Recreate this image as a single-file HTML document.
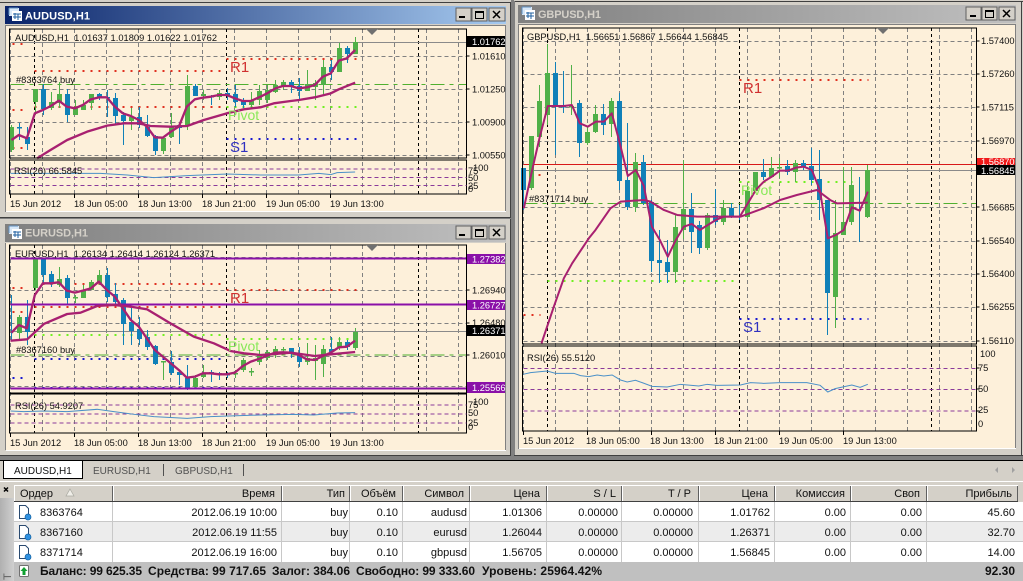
<!DOCTYPE html>
<html><head><meta charset="utf-8"><title>MT4</title>
<style>
html,body{margin:0;padding:0;background:#808080;width:1023px;height:581px;overflow:hidden}
svg{display:block;font-size:9.3px;overflow:hidden}
text{font-family:"Liberation Sans",sans-serif;fill:#111}
.c{shape-rendering:crispEdges}
.g{stroke:#808080;stroke-width:1;stroke-dasharray:4 3;fill:none}
.k{stroke:#000;stroke-width:1;stroke-dasharray:3 3;fill:none}
.bw{stroke:#1080b8;stroke-width:1;fill:none}
.bb{stroke:#1080b8;stroke-width:5;fill:none}
.gw{stroke:#50b048;stroke-width:1;fill:none}
.gb{stroke:#50b048;stroke-width:5;fill:none}
.m{fill:none;stroke:#a82070;stroke-width:7;stroke-linejoin:round}
.m3{fill:none;stroke:#a82070;stroke-width:6;stroke-linejoin:round}
.r{fill:none;stroke:#4a90c8;stroke-width:3}
.pd{stroke:#8a3a9a;stroke-width:1;stroke-dasharray:4 3;fill:none}
.dr{stroke:#e03020;stroke-width:2;stroke-dasharray:2 6;fill:none}
.dg{stroke:#70f020;stroke-width:2;stroke-dasharray:2 6;fill:none}
.db{stroke:#1818d0;stroke-width:2;stroke-dasharray:2 6;fill:none}
.o{stroke:#50b030;stroke-width:1;stroke-dasharray:14 5 4 5;fill:none}
.t{font-weight:bold;font-size:11px}
.w{fill:#fff}
.e{text-anchor:end}
.b{font-weight:bold;font-size:12px}
.tb{font-size:11px}
.tab{font-size:10px}
</style></head><body>
<svg width="1023" height="581" viewBox="0 0 1023 581" xmlns="http://www.w3.org/2000/svg">
<defs>
<linearGradient id="a" x1="0" x2="1" y1="0" y2="0"><stop offset="0" stop-color="#0a246a"/><stop offset="1" stop-color="#a6caf0"/></linearGradient>
<linearGradient id="n" x1="0" x2="1" y1="0" y2="0"><stop offset="0" stop-color="#808080"/><stop offset="1" stop-color="#c0c0c0"/></linearGradient>
<linearGradient id="sb" x1="0" x2="1" y1="0" y2="0"><stop offset="0" stop-color="#b0b0b0"/><stop offset="1" stop-color="#d0d0d0"/></linearGradient>
</defs>
<rect width="1023" height="581" fill="#808080"/>

<!-- WINDOW 1 -->
<g class="c">
<rect x="0" y="0" width="511" height="218" fill="#d4d0c8"/>
<rect x="0" y="2" width="511" height="1" fill="#404040"/>
<rect x="510" y="2" width="1" height="216" fill="#404040"/>
<rect x="0" y="217" width="511" height="1" fill="#404040"/>
<rect x="5" y="6" width="501" height="18" fill="url(#a)"/>
<rect x="5" y="25" width="501" height="187" fill="#808080"/>
<rect x="6" y="26" width="499" height="185" fill="#fdf0da"/>
<rect x="6" y="211" width="500" height="1" fill="#fff"/>
</g>
<g transform="translate(.5,0)">
<g class="c">
<path class="g" d="M10 29V194M42 29V194M74 29V194M106 29V194M138 29V194M170 29V194M202 29V194M234 29V194M266 29V194M298 29V194M330 29V194M362 29V194M394 29V194M426 29V194M458 29V194"/>
<path class="g" d="M10 56.500H466M10 89.500H466M10 122.500H466M10 155.500H466"/>
<path class="k" d="M34 29V194M226 29V194M418 29V194"/>
<path d="M10 42.500H466" stroke="#8a8a8a" fill="none"/>
<path class="o" d="M10 84.500H466"/>
<path class="dr" d="M12 44H28M34 71H222M226 59H356M34 107H222M12 110H28M12 148H28"/>
<path class="dg" d="M226 107H356"/>
<path class="db" d="M226 139H356"/>
<path class="bw" d="M19 123V140M27 127V150M43 84V115M67 89V122M99 93V100M107 90V117M115 93V125M123 112V145M139 107V128M147 115V137M155 135V155M179 125V144M195 84V96M211 95V105M227 88V100M235 85V107M243 98V108M291 80V93M299 78V100M331 60V80M347 46V63"/>
<path class="gw" d="M11 125V152M35 89V115M51 92V110M59 82V108M75 100V115M83 100V110M91 94V110M131 108V130M163 138V154M171 113V138M187 75V130M203 90V100M219 90V100M251 92V108M259 85V105M267 85V103M275 80V93M283 80V90M307 70V91M315 80V100M323 60V95M339 43V72M355 37V54"/>
<path class="bb" d="M19 127V128.500M27 137V144M43 89V109M67 94V115M99 94V97M107 97V98.500M115 98V116M123 115V121M139 117V125M147 127V136M155 136V151M179 125V128M195 86V96M211 96V97.500M227 93V96M235 94V102M243 101V105M291 82V87M299 86V91M331 67V72M347 48V54"/>
<path class="gb" d="M11 127V150M35 89V102M51 102V108M59 94V103M75 107V115M83 105V110M91 94V103M131 117V121M163 138V151M171 127V137M187 86V125M203 94V96M219 93V97M251 100V105M259 91V100M267 90V100M275 85V92M283 82V87M307 84V91M315 83V87M323 67V85M339 48V72M355 42V54"/>
</g>
<polyline class="m" transform="scale(.3333)" points="33,420 55,405 79,415 103,340 127,330 151,318 175,302 199,320 223,325 247,315 271,298 295,292 319,292 343,320 367,340 391,348 415,360 439,380 463,412 487,413 511,395 535,380 559,320 583,298 607,293 631,290 655,285 679,285 703,295 727,303 751,303 780,290 800,280 825,265 847,258 871,258 895,265 919,262 943,255 967,230 991,220 1015,182 1039,175 1064,150"/>
<polyline class="m" transform="scale(.3333)" points="110,475 150,450 200,420 260,395 320,377 370,370 415,370 450,378 510,380 560,378 610,360 679,340 730,328 780,322 820,310 871,303 895,300 943,292 991,280 1015,268 1064,248"/>
<g class="c">
<rect x="9" y="29" width="457" height="129" fill="none" stroke="#000"/>
<rect x="9" y="160" width="457" height="34" fill="none" stroke="#000"/>
<path class="pd" d="M10 169H466M10 177.500H466M10 185.500H466"/>
<path d="M466 42V43M466 56H469M466 89H469M466 122H469M466 155H469M10 194V198M74 194V198M138 194V198M202 194V198M266 194V198M330 194V198" stroke="#000"/>
</g>
<polyline class="r" transform="scale(.3333)" points="30,520 100,520 200,520 300,520 380,525 460,533 560,527 680,522 780,525 895,525 955,520 991,524 1010,518 1064,516"/>
</g>
<path d="M366 29h12l-6 6z" fill="#707070"/>
<text x="15" y="41" textLength="202">AUDUSD,H1&#160;&#160;1.01637 1.01809 1.01622 1.01762</text>
<text x="16" y="83">#8363764 buy</text>
<text x="14" y="174">RSI(26) 66.5845</text>
<text x="230" y="72" style="font-size:15px;fill:#d03030">R1</text>
<text x="228" y="120" style="font-size:14px;fill:#88e858">Pivot</text>
<text x="230" y="152" style="font-size:15px;fill:#3030c0">S1</text>
<rect class="c" x="467" y="36" width="38" height="11" fill="#000"/>
<text x="472" y="45" class="w">1.01762</text>
<text x="472" y="59.500">1.01610</text><text x="472" y="92.500">1.01250</text><text x="472" y="125.500">1.00900</text><text x="472" y="158.500">1.00550</text>
<text x="473" y="171">100</text><text x="468" y="174">75</text><text x="468" y="181">50</text><text x="468" y="189">25</text><text x="468" y="192">0</text>
<text x="10" y="207">15 Jun 2012</text><text x="74" y="207">18 Jun 05:00</text><text x="138" y="207">18 Jun 13:00</text><text x="202" y="207">18 Jun 21:00</text><text x="266" y="207">19 Jun 05:00</text><text x="330" y="207">19 Jun 13:00</text>

<!-- WINDOW 2 -->
<g class="c">
<rect x="0" y="218" width="511" height="238" fill="#d4d0c8"/>
<rect x="510" y="218" width="1" height="238" fill="#404040"/>
<rect x="0" y="218" width="511" height="1" fill="#808080"/>
<rect x="5" y="224" width="501" height="18" fill="url(#n)"/>
<rect x="5" y="243" width="501" height="207" fill="#808080"/>
<rect x="6" y="243" width="499" height="207" fill="#fdf0da"/>
<rect x="6" y="450" width="500" height="1" fill="#fff"/>
<rect x="0" y="455" width="511" height="1" fill="#404040"/>
</g>
<g transform="translate(.5,0)">
<g class="c">
<path class="g" d="M10 245V433M42 245V433M74 245V433M106 245V433M138 245V433M170 245V433M202 245V433M234 245V433M266 245V433M298 245V433M330 245V433M362 245V433M394 245V433M426 245V433M458 245V433"/>
<path class="g" d="M10 257.500H466M10 290.500H466M10 323.500H466M10 356.500H466M10 386.500H466"/>
<path class="k" d="M34 245V433M226 245V433M418 245V433"/>
<path d="M10 331.500H466" stroke="#8a8a8a" fill="none"/>
<path class="o" d="M10 355H466"/>
<path class="dr" d="M34 284H222M226 290H356M12 288H28M34 307H222M12 312H28"/>
<path class="dg" d="M34 335H222M226 339H356"/>
<path class="db" d="M34 359H222M12 378H28M34 388H222"/>
<path class="bw" d="M11 295V340M27 300V345M43 259V283M51 271V287M67 275V304M107 268V302M115 283V305M123 298V345M131 308V345M139 317V345M147 330V350M155 345V365M171 351V375M179 370V385M187 365V390M211 370V382M219 372V380M227 372V378M291 348V358M299 347V367M331 337V352M347 340V350"/>
<path class="gw" d="M19 315V340M35 259V290M59 267V287M75 295V303M83 285V298M91 280V290M99 270V285M163 361V380M195 375V388M203 365V378M235 370V378M243 358V372M251 368V376M259 350V365M267 350V360M275 346V358M283 347V352M307 343V365M315 345V380M323 345V377M339 337V350M355 328V350"/>
<path class="bb" d="M27 317V332M43 259V275M51 274V283M67 278V298M107 275V297M115 294V302M123 300V324M131 322V331M139 329V339M147 337V347M155 346V364M171 362V373M179 372V375M187 378V388M211 372V374M219 373V375M227 374V375.500M291 348V353M299 353V362M331 349V352M347 342V347"/>
<path class="gb" d="M19 317V333M35 259V288M59 279V285M75 297V298.500M83 290V298M91 282V290M99 275V283M163 361V362.500M195 378V387M203 373V377M235 373V374.500M243 360V370M251 371V372.500M259 355V362M267 352V358M275 349V355M283 349V350.500M307 358V362M315 358V361M323 349V364M339 342V347M355 332V348"/>
</g>
<path d="M10 258.500H466M10 304.500H466M10 388.500H466" stroke="#8a10a8" stroke-width="2" fill="none" class="c"/>
<polyline class="m" transform="translate(0,220) scale(.3333)" points="33,338 55,315 79,325 103,225 127,190 151,190 175,187 199,212 223,218 247,212 271,205 295,185 319,210 343,230 367,265 391,300 415,320 439,355 463,390 487,410 511,430 535,450 559,473 583,470 607,460 631,460 655,463 679,463 703,458 727,438 751,425 780,415 823,398 847,397 871,398 895,405 919,418 943,420 967,408 991,398 1015,382 1039,380 1064,362"/>
<polyline class="m" transform="translate(0,220) scale(.3333)" points="30,362 80,358 130,312 200,282 240,278 290,258 340,255 390,260 440,268 510,310 580,350 640,370 690,393 730,400 780,405 823,402 871,398 943,408 991,403 1064,396"/>
<g class="c">
<rect x="9" y="245" width="457" height="148" fill="none" stroke="#000"/>
<rect x="9" y="394" width="457" height="39" fill="none" stroke="#000"/>
<path class="pd" d="M10 405H466M10 414H466M10 423H466"/>
<path d="M466 290H469M466 323H469M466 355H469M10 433V437M74 433V437M138 433V437M202 433V437M266 433V437M330 433V437" stroke="#000"/>
</g>
<polyline class="r" transform="translate(0,220) scale(.3333)" points="30,573 70,575 130,573 200,575 290,568 340,575 400,583 460,590 560,595 630,590 780,585 880,583 940,585 1010,579 1064,578"/>
</g>
<path d="M366 245h12l-6 6z" fill="#707070"/>
<text x="15" y="257" textLength="200">EURUSD,H1&#160;&#160;1.26134 1.26414 1.26124 1.26371</text>
<text x="16" y="353">#8367160 buy</text>
<text x="15" y="409">RSI(26) 54.9207</text>
<text x="230" y="303" style="font-size:15px;fill:#d03030">R1</text>
<text x="228" y="351" style="font-size:14px;fill:#88e858">Pivot</text>
<text x="472" y="293.500">1.26940</text><text x="472" y="326">1.26480</text><text x="472" y="358.500">1.26010</text>
<g class="c">
<rect x="467" y="254" width="38" height="10" fill="#8a10a8"/><rect x="467" y="300" width="38" height="10" fill="#8a10a8"/><rect x="467" y="382" width="38" height="11" fill="#8a10a8"/><rect x="467" y="325" width="38" height="11" fill="#000"/>
</g>
<text x="472" y="262.500" class="w">1.27382</text><text x="472" y="308.500" class="w">1.26727</text><text x="472" y="391" class="w">1.25566</text><text x="472" y="334" class="w">1.26371</text>
<text x="473" y="405">100</text><text x="468" y="408">75</text><text x="468" y="416">50</text><text x="468" y="426">25</text><text x="468" y="430">0</text>
<text x="10" y="446">15 Jun 2012</text><text x="74" y="446">18 Jun 05:00</text><text x="138" y="446">18 Jun 13:00</text><text x="202" y="446">18 Jun 21:00</text><text x="266" y="446">19 Jun 05:00</text><text x="330" y="446">19 Jun 13:00</text>

<!-- WINDOW 3 -->
<g class="c">
<rect x="514" y="0" width="509" height="456" fill="#d4d0c8"/>
<rect x="514" y="1" width="509" height="1" fill="#404040"/>
<rect x="514" y="1" width="1" height="455" fill="#808080"/>
<rect x="1021" y="1" width="1" height="455" fill="#404040"/>
<rect x="518" y="5" width="498" height="18" fill="url(#n)"/>
<rect x="518" y="24" width="498" height="425" fill="#808080"/>
<rect x="519" y="25" width="496" height="423" fill="#fdf0da"/>
<rect x="519" y="448" width="497" height="1" fill="#fff"/>
<rect x="514" y="455" width="509" height="1" fill="#404040"/>
</g>
<g transform="translate(.5,0)">
<g class="c">
<path class="g" d="M523 28V431M555 28V431M587 28V431M619 28V431M651 28V431M683 28V431M715 28V431M747 28V431M779 28V431M811 28V431M843 28V431M875 28V431M907 28V431M939 28V431M971 28V431"/>
<path class="g" d="M523 41.500H976M523 74.500H976M523 107.500H976M523 141.500H976M523 207.500H976M523 241.500H976M523 274.500H976M523 307.500H976M523 341.500H976"/>
<path class="k" d="M547 28V431M739 28V431M931 28V431"/>
<path d="M523 164.500H976" stroke="#d81818" fill="none"/>
<path d="M523 170.500H976" stroke="#8a8a8a" fill="none"/>
<path class="o" d="M523 203.500H976"/>
<path class="dr" d="M739 80H868M523 315H540M538 175H540"/>
<path class="dg" d="M739 182H852M547 281H733"/>
<path class="db" d="M739 319H868"/>
<path class="bw" d="M523 168V210M555 62V155M563 71V113M579 100V157M603 104V135M619 93V190M627 123V210M643 155V205M651 200V272M659 230V283M667 240V283M691 193V253M699 221V254M715 189V225M731 203V218M739 205V220M763 159V180M787 160V175M803 160V170M811 148V185M819 150V220M827 200V335M859 177V242"/>
<path class="gw" d="M531 136V190M539 85V147M547 44V125M571 65V115M587 127V145M595 105V133M611 98V137M635 153V212M675 215V283M683 160V239M707 213V250M723 200V225M747 187V218M755 172V193M771 157V177M779 158V178M795 160V182M835 200V328M843 167V235M851 167V225M867 165V218"/>
<path class="bb" d="M523 168V190M555 73V106M563 106V107.500M579 103V143M603 114V125M619 101V181M627 180V207M643 162V203M651 202V261M659 260V263M667 262V272M691 209V232M699 225V248M715 215V222M731 208V217M763 172V177M787 166V172M803 163V167M811 166V180M819 179V200M827 200V293"/>
<path class="gb" d="M531 136V188M539 101V137M547 73V115M571 106V107.500M587 132V143M595 114V132M611 101V124M635 162V207M675 227V272M683 209V230M707 215V248M723 208V222M747 191V217M755 172V191M771 168V177M779 167V168.500M795 163V172M835 233V297M843 222V235M851 185V222M867 170V217"/>
</g>
<polyline class="m3" transform="translate(510,0) scale(.3333)" points="40,625 65,510 88,410 112,318 136,318 160,318 184,315 208,370 232,380 256,365 280,365 304,340 328,430 352,528 376,510 400,558 424,680 448,720 472,770 496,720 520,680 544,672 568,690 592,675 616,660 640,650 664,650 688,650 712,610 736,570 760,545 784,530 808,512 832,512 856,503 880,500 904,510 928,570 952,715 976,705 1000,690 1024,622 1048,632 1072,575"/>
<polyline class="m3" transform="translate(510,0) scale(.3333)" points="93,1030 130,920 160,835 185,790 205,760 235,715 255,690 300,625 330,605 400,600 420,605 460,630 500,645 560,650 690,650 759,625 809,600 859,585 919,570 959,600 979,610 1072,608"/>
<g class="c">
<rect x="522" y="28" width="454" height="316" fill="none" stroke="#000"/>
<rect x="522" y="346" width="454" height="85" fill="none" stroke="#000"/>
<path class="pd" d="M523 368.500H976M523 389.500H976M523 411H976"/>
<path d="M976 41H979M976 74H979M976 107H979M976 141H979M976 207H979M976 241H979M976 274H979M976 307H979M976 341H979M976 368H979M976 389H979M976 411H979M523 431V435M587 431V435M651 431V435M715 431V435M779 431V435M843 431V435" stroke="#000"/>
</g>
<polyline class="r" transform="translate(510,230) scale(.3333)" points="38,433 60,428 110,423 135,430 190,430 210,437 235,440 260,435 280,438 305,435 330,450 350,456 375,451 395,458 425,469 470,471 510,463 565,468 590,463 620,466 690,465 720,458 759,460 809,458 889,458 929,466 952,486 974,476 1024,465 1049,472 1072,463"/>
</g>
<path d="M877 28h12l-6 6z" fill="#707070"/>
<text x="527" y="40" textLength="201">GBPUSD,H1&#160;&#160;1.56651 1.56867 1.56644 1.56845</text>
<text x="529" y="202">#8371714 buy</text>
<text x="527" y="361">RSI(26) 55.5120</text>
<text x="743" y="93" style="font-size:15px;fill:#d03030">R1</text>
<text x="741" y="195" style="font-size:14px;fill:#88e858">Pivot</text>
<text x="743" y="332" style="font-size:15px;fill:#3030c0">S1</text>
<text x="981" y="44">1.57400</text><text x="981" y="77">1.57260</text><text x="981" y="110.500">1.57115</text><text x="981" y="144">1.56970</text><text x="981" y="210.500">1.56685</text><text x="981" y="244">1.56540</text><text x="981" y="277">1.56400</text><text x="981" y="310">1.56255</text><text x="981" y="344">1.56110</text>
<g class="c"><rect x="977" y="158" width="38" height="8" fill="#f01818"/><rect x="977" y="165" width="38" height="10" fill="#000"/></g>
<text x="981" y="165" style="fill:#fff">1.56870</text><text x="981" y="174" class="w">1.56845</text>
<text x="980" y="357">100</text><text x="978" y="371">75</text><text x="978" y="392">50</text><text x="978" y="413">25</text><text x="978" y="427">0</text>
<text x="523" y="444">15 Jun 2012</text><text x="586" y="444">18 Jun 05:00</text><text x="650" y="444">18 Jun 13:00</text><text x="714" y="444">18 Jun 21:00</text><text x="779" y="444">19 Jun 05:00</text><text x="843" y="444">19 Jun 13:00</text>

<!-- title bars -->
<g id="ic1" class="c"><rect x="9" y="8" width="10" height="8" fill="#d8e8f8"/><rect x="12" y="11" width="10" height="10" fill="#fff"/><path d="M13 14h8M13 17h8M15 13v6M18 14v6" stroke="#2060a0" fill="none"/><path d="M9 8h9M9 8v7" stroke="#6090c0" fill="none"/></g>
<g class="c" transform="translate(0,218)"><rect x="9" y="8" width="10" height="8" fill="#d8e8f8"/><rect x="12" y="11" width="10" height="10" fill="#fff"/><path d="M13 14h8M13 17h8M15 13v6M18 14v6" stroke="#2060a0" fill="none"/><path d="M9 8h9M9 8v7" stroke="#6090c0" fill="none"/></g>
<g class="c" transform="translate(513,-1)"><rect x="9" y="8" width="10" height="8" fill="#d8e8f8"/><rect x="12" y="11" width="10" height="10" fill="#fff"/><path d="M13 14h8M13 17h8M15 13v6M18 14v6" stroke="#2060a0" fill="none"/><path d="M9 8h9M9 8v7" stroke="#6090c0" fill="none"/></g>
<text x="25" y="19.500" class="t w" textLength="65">AUDUSD,H1</text>
<text x="25" y="236.500" class="t" style="fill:#d4d0c8" textLength="63">EURUSD,H1</text>
<text x="538" y="18" class="t" style="fill:#d4d0c8" textLength="63">GBPUSD,H1</text>

<!-- buttons -->
<g class="c" id="btns">
<rect x="456" y="8" width="15" height="13" fill="#d4d0c8" stroke="#606060"/><rect x="459" y="16" width="6" height="2" fill="#000"/>
<rect x="472" y="8" width="15" height="13" fill="#d4d0c8" stroke="#606060"/><path d="M475.500 11.500h8v7h-8zM475.500 12.500h8" fill="none" stroke="#000"/>
<rect x="489" y="8" width="16" height="13" fill="#d4d0c8" stroke="#606060"/>
<rect x="456" y="226" width="15" height="13" fill="#d4d0c8" stroke="#606060"/><rect x="459" y="234" width="6" height="2" fill="#000"/>
<rect x="472" y="226" width="15" height="13" fill="#d4d0c8" stroke="#606060"/><path d="M475.500 229.500h8v7h-8zM475.500 230.500h8" fill="none" stroke="#000"/>
<rect x="489" y="226" width="16" height="13" fill="#d4d0c8" stroke="#606060"/>
<rect x="966" y="7" width="15" height="13" fill="#d4d0c8" stroke="#606060"/><rect x="970" y="15" width="6" height="2" fill="#000"/>
<rect x="982" y="7" width="15" height="13" fill="#d4d0c8" stroke="#606060"/><path d="M985.500 10.500h8v7h-8zM985.500 11.500h8" fill="none" stroke="#000"/>
<rect x="999" y="7" width="16" height="13" fill="#d4d0c8" stroke="#606060"/>
</g>
<path d="M493 11l7 7M500 11l-7 7M493 229l7 7M500 229l-7 7M1003 10l7 7M1010 10l-7 7" stroke="#000" stroke-width="1.500" fill="none"/>

<!-- BOTTOM PANEL -->
<g class="c">
<rect x="0" y="460" width="1023" height="121" fill="#d4d0c8"/>
<rect x="0" y="460" width="1023" height="1" fill="#000"/>
<rect x="0" y="481" width="1023" height="1" fill="#fff"/>
<rect x="3" y="461" width="80" height="17" fill="#fff"/>
<path d="M3.500 461V478.500H82.500V461" stroke="#000" fill="none"/>
<path d="M163.500 464V476M243.500 464V476" stroke="#505050" fill="none"/>
<rect x="0" y="498" width="14" height="83" fill="url(#sb)"/>
</g>
<text x="14" y="474" class="tab">AUDUSD,H1</text>
<text x="93" y="474" class="tab" style="fill:#505050">EURUSD,H1</text>
<text x="175" y="474" class="tab" style="fill:#505050">GBPUSD,H1</text>
<path d="M998 467v6l-3-3zM1012 467v6l3-3z" fill="#a0a0a0"/>
<path d="M4 487.500l4 4M8 487.500l-4 4" stroke="#000" stroke-width="1.500" fill="none"/>
<text transform="translate(11,580) rotate(-90)" class="tb" style="fill:#606060">Т</text>

<!-- table -->
<g class="c">
<rect x="14" y="485" width="1009" height="17" fill="#d4d0c8"/>
<rect x="14" y="502" width="1009" height="20" fill="#fff"/>
<rect x="14" y="522" width="1009" height="20" fill="#ececec"/>
<rect x="14" y="542" width="1009" height="20" fill="#fff"/>
<path d="M14 521.500H1023M14 541.500H1023" stroke="#c8c8c8" fill="none"/>
<path d="M112.500 502V562M281.500 502V562M349.500 502V562M402.500 502V562M469.500 502V562M546.500 502V562M621.500 502V562M698.500 502V562M774.500 502V562M850.500 502V562M926.500 502V562" stroke="#c8c8c8" fill="none"/>
<!-- header bevels -->
<g fill="none">
<path d="M14.500 501V485.500H1018" stroke="#fff"/>
<path d="M14 501.500H1018" stroke="#404040"/>
<path d="M113.500 486V501M282.500 486V501M350.500 486V501M403.500 486V501M470.500 486V501M547.500 486V501M622.500 486V501M699.500 486V501M775.500 486V501M851.500 486V501M927.500 486V501" stroke="#fff"/>
<path d="M112.500 486V501M281.500 486V501M349.500 486V501M402.500 486V501M469.500 486V501M546.500 486V501M621.500 486V501M698.500 486V501M774.500 486V501M850.500 486V501M926.500 486V501M1017.500 486V501" stroke="#606060"/>
</g>
<rect x="14" y="562" width="1009" height="19" fill="#c0c0c0"/>
</g>
<path d="M70 489l4 7h-8z" fill="#f0eee8" stroke="#a8a8a0" stroke-width=".7"/>
<g class="tb">
<text x="20" y="497" textLength="33">Ордер</text>
<text x="275" y="497" class="e">Время</text><text x="345" y="497" class="e">Тип</text><text x="396" y="497" class="e">Объём</text><text x="464" y="497" class="e">Символ</text><text x="540" y="497" class="e">Цена</text><text x="616" y="497" class="e">S / L</text><text x="691" y="497" class="e">T / P</text><text x="768" y="497" class="e">Цена</text><text x="845" y="497" class="e">Комиссия</text><text x="920" y="497" class="e">Своп</text><text x="1012" y="497" class="e">Прибыль</text>
<text x="40" y="516">8363764</text><text x="277" y="516" class="e">2012.06.19 10:00</text><text x="348" y="516" class="e">buy</text><text x="398" y="516" class="e">0.10</text><text x="467" y="516" class="e">audusd</text><text x="542" y="516" class="e">1.01306</text><text x="618" y="516" class="e">0.00000</text><text x="693" y="516" class="e">0.00000</text><text x="770" y="516" class="e">1.01762</text><text x="846" y="516" class="e">0.00</text><text x="922" y="516" class="e">0.00</text><text x="1015" y="516" class="e">45.60</text>
<text x="40" y="536">8367160</text><text x="277" y="536" class="e">2012.06.19 11:55</text><text x="348" y="536" class="e">buy</text><text x="398" y="536" class="e">0.10</text><text x="467" y="536" class="e">eurusd</text><text x="542" y="536" class="e">1.26044</text><text x="618" y="536" class="e">0.00000</text><text x="693" y="536" class="e">0.00000</text><text x="770" y="536" class="e">1.26371</text><text x="846" y="536" class="e">0.00</text><text x="922" y="536" class="e">0.00</text><text x="1015" y="536" class="e">32.70</text>
<text x="40" y="556">8371714</text><text x="277" y="556" class="e">2012.06.19 16:00</text><text x="348" y="556" class="e">buy</text><text x="398" y="556" class="e">0.10</text><text x="467" y="556" class="e">gbpusd</text><text x="542" y="556" class="e">1.56705</text><text x="618" y="556" class="e">0.00000</text><text x="693" y="556" class="e">0.00000</text><text x="770" y="556" class="e">1.56845</text><text x="846" y="556" class="e">0.00</text><text x="922" y="556" class="e">0.00</text><text x="1015" y="556" class="e">14.00</text>
</g>
<!-- row icons -->
<g fill="#fff" stroke="#2a4a70" stroke-width="1">
<path d="M19.500 505.500h6l3 3v10h-9z"/><path d="M19.500 525.500h6l3 3v10h-9z"/><path d="M19.500 545.500h6l3 3v10h-9z"/>
</g>
<g fill="#3090e0" stroke="#1060a0" stroke-width=".7"><circle cx="28" cy="517" r="3"/><circle cx="28" cy="537" r="3"/><circle cx="28" cy="557" r="3"/></g>
<rect x="19.500" y="565.500" width="9" height="11" fill="#fff" stroke="#707070" rx="1"/>
<path d="M24 567l3.500 4h-2v4h-3v-4h-2z" fill="#10a030"/>
<g>
<text x="40" y="575" class="b" textLength="102">Баланс: 99 625.35</text>
<text x="148" y="575" class="b" textLength="118">Средства: 99 717.65</text>
<text x="272" y="575" class="b" textLength="78">Залог: 384.06</text>
<text x="356" y="575" class="b" textLength="119">Свободно: 99 333.60</text>
<text x="482" y="575" class="b" textLength="120">Уровень: 25964.42%</text>
<text x="1015" y="575" class="b e">92.30</text>
</g>
</svg>
</body></html>
